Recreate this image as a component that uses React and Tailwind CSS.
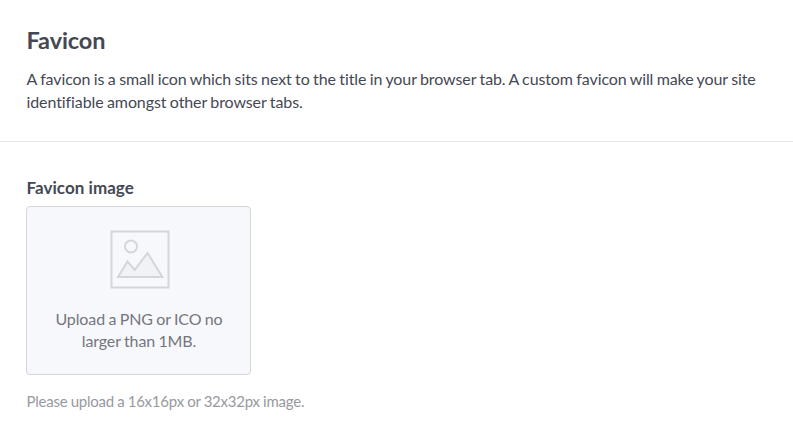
function ImagePlaceholderIcon() {
  return (
    <svg width="60" height="60" viewBox="0 0 60 60" fill="none" stroke="#d5d6da" strokeWidth="2" aria-hidden="true">
      <rect x="1.5" y="1.5" width="57" height="56" />
      <circle cx="21" cy="16.5" r="6" />
      <path d="M8 47 L17.5 31.5 L24.7 39.8 L37.5 23 L52.5 47 Z" fill="#f1f2f5" />
    </svg>
  );
}

export default function App() {
  return (
    <div className="min-h-screen bg-white font-['Lato',sans-serif] text-[#454854]">
      <header className="h-[142px] border-b border-[#e5e5e8] pr-[26px] pl-[26.5px] pt-6">
        <h1 className="text-[23.5px] leading-8 font-bold tracking-[-0.1px]">Favicon</h1>
        <p className="mt-[11px] text-base leading-[23px] tracking-[-0.1px] [word-spacing:-0.55px]">
          A favicon is a small icon which sits next to the title in your browser tab. A custom favicon will make your site
          identifiable amongst other browser tabs.
        </p>
      </header>

      <section className="px-[26px] pt-[34px]">
        <h2 className="pl-[0.5px] text-[17px] leading-6 font-bold tracking-[0.04px]">Favicon image</h2>
        <button
          type="button"
          className="mt-1.5 flex h-[169px] w-[225px] flex-col items-center rounded border border-[#d5d6da] bg-[#f7f8fc] pt-[23px] pl-0.5 text-[#74767c]"
        >
          <ImagePlaceholderIcon />
          <span className="mt-[18px] w-[180px] pr-px text-base leading-[22px] tracking-[-0.12px] [word-spacing:-0.55px]">
            Upload a PNG or ICO no larger than 1MB.
          </span>
        </button>
        <p className="mt-[15px] pl-[0.5px] text-[15px] leading-[22px] tracking-[-0.24px] text-[#97999e] [word-spacing:-0.3px]">
          Please upload a 16x16px or 32x32px image.
        </p>
      </section>
    </div>
  );
}
